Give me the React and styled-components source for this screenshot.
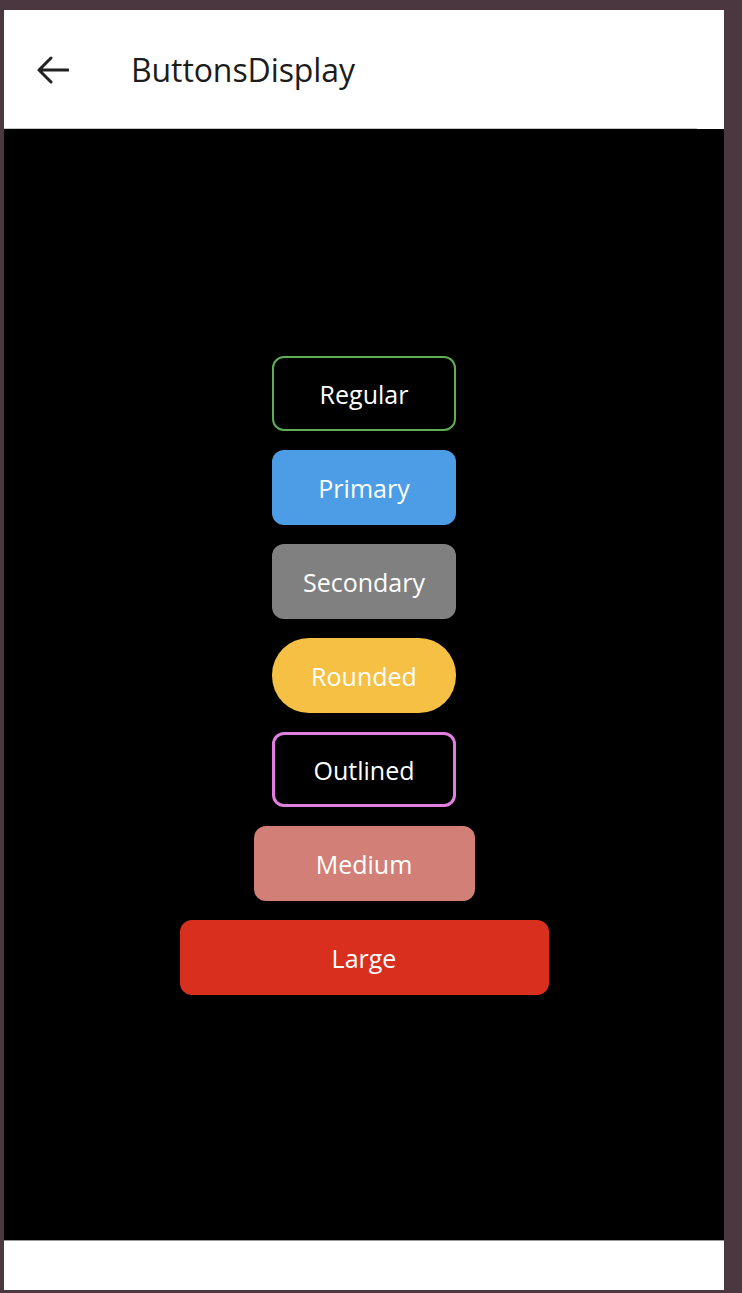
import React from 'react';
import styled, { createGlobalStyle, css } from 'styled-components';

//Global page styles
const GlobalStyle = createGlobalStyle`
  html, body {
    margin: 0;
    padding: 0;
    background-color: #4a3740;
  }
  body {
    font-family: 'Open Sans', 'Noto Sans', sans-serif;
  }
  #root {
    min-height: 1293px;
  }
`;

const buttons = [
  { label: 'Regular', variant: 'regular' },
  { label: 'Primary', variant: 'primary' },
  { label: 'Secondary', variant: 'secondary' },
  { label: 'Rounded', variant: 'rounded' },
  { label: 'Outlined', variant: 'outlined' },
  { label: 'Medium', variant: 'medium' },
  { label: 'Large', variant: 'large' },
];

function BackArrow() {
  return (
    <svg width="32" height="28" viewBox="0 0 32 28" fill="none">
      <path d="M14 2 L2 14 L14 26 M2 14 H31" stroke="#222" strokeWidth="3" strokeLinecap="round" strokeLinejoin="round" />
    </svg>
  );
}

//Export default component
export default function App() {
  return (
    <>
      <GlobalStyle />
      <SDFrame>
        <SDHeader>
          <SDBackButton aria-label="back">
            <BackArrow />
          </SDBackButton>
          <SDTitle>ButtonsDisplay</SDTitle>
        </SDHeader>
        <SDContent>
          <SDButtonStack>
            {buttons.map((b) => (
              <SDButton key={b.label} $variant={b.variant}>
                {b.label}
              </SDButton>
            ))}
          </SDButtonStack>
        </SDContent>
        <SDFooter />
      </SDFrame>
    </>
  );
}

//Styled components
const SDFrame = styled.div`
  box-sizing: border-box;
  display: flex;
  flex-direction: column;
  margin: 10px 0 0 4px;
  width: 720px;
  height: 1280px;
  background-color: white;
`;

const SDHeader = styled.div`
  box-sizing: border-box;
  display: flex;
  align-items: center;
  height: 119px;
  flex-shrink: 0;
  padding: 0 0 2px 33px;
  background-color: white;
  position: relative;
  &::after {
    content: '';
    position: absolute;
    left: 0;
    bottom: 0;
    width: 693px;
    height: 1px;
    background-color: #c8c8c8;
  }
`;

const SDBackButton = styled.div`
  display: flex;
  align-items: center;
  width: 32px;
  height: 28px;
  margin-top: 2px;
  cursor: pointer;
`;

const SDTitle = styled.div`
  margin-left: 62px;
  margin-top: 2px;
  font-family: 'Open Sans', sans-serif;
  font-size: 32px;
  letter-spacing: -0.1px;
  color: #1c1c1c;
`;

const SDContent = styled.div`
  flex: 1;
  display: flex;
  align-items: center;
  justify-content: center;
  background-color: black;
  padding-bottom: 18px;
  border-bottom: 1px solid #9a9a9a;
`;

const SDButtonStack = styled.div`
  display: flex;
  flex-direction: column;
  align-items: center;
  gap: 19px;
`;

const variants = {
  regular: css`
    background-color: black;
    border: 2px solid #5fae55;
  `,
  primary: css`
    background-color: #4d9de6;
  `,
  secondary: css`
    background-color: #808080;
  `,
  rounded: css`
    background-color: #f5c043;
    border-radius: 37px;
  `,
  outlined: css`
    background-color: black;
    border: 3px solid #e07fe0;
  `,
  medium: css`
    width: 221px;
    background-color: #d17f77;
  `,
  large: css`
    width: 369px;
    background-color: #d92f1f;
  `,
};

const SDButton = styled.div`
  box-sizing: border-box;
  display: flex;
  align-items: center;
  justify-content: center;
  width: 184px;
  height: 75px;
  border-radius: 12px;
  font-family: 'Open Sans', sans-serif;
  font-size: 25px;
  color: white;
  cursor: pointer;
  ${(props) => variants[props.$variant]}
`;

const SDFooter = styled.div`
  height: 49px;
  flex-shrink: 0;
  background-color: white;
`;
